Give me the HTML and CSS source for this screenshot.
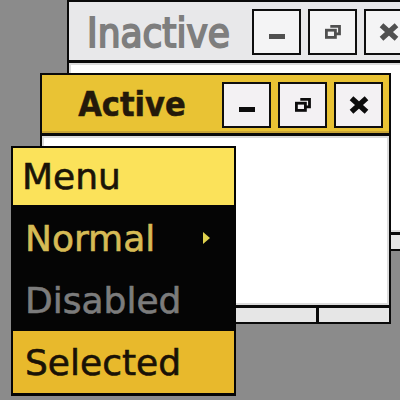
FILE: index.html
```html
<!DOCTYPE html>
<html>
<head>
<meta charset="utf-8">
<link rel="stylesheet" href="styles.css">
</head>
<body>
<div class="desk">
  <div class="window inactive">
    <div class="titlebar">
      <span class="title">Inactive</span>
      <div class="buttons">
        <span class="btn"><svg width="16" height="16" viewBox="0 0 16 16"><rect x="0" y="10" width="16" height="5" fill="currentColor"/></svg></span>
        <span class="btn"><svg width="16" height="14" viewBox="0 0 16 14"><path d="M5.3 1.4h9.2v7.4H11" fill="none" stroke="currentColor" stroke-width="2.8"/><rect x="1.4" y="5.2" width="9" height="7.2" fill="none" stroke="currentColor" stroke-width="2.8"/></svg></span>
        <span class="btn"><svg width="20" height="18" viewBox="0 0 20 18"><path d="M4.5 4L15.5 14M15.5 4L4.5 14" stroke="currentColor" stroke-width="5.4" stroke-linecap="square"/></svg></span>
      </div>
    </div>
    <div class="content"></div>
    <div class="footer"><span class="seg"></span><span class="seg mid"></span><span class="seg"></span></div>
  </div>
  <div class="window active">
    <div class="titlebar">
      <span class="title">Active</span>
      <div class="buttons">
        <span class="btn"><svg width="16" height="16" viewBox="0 0 16 16"><rect x="0" y="10" width="16" height="5" fill="currentColor"/></svg></span>
        <span class="btn"><svg width="16" height="14" viewBox="0 0 16 14"><path d="M5.3 1.4h9.2v7.4H11" fill="none" stroke="currentColor" stroke-width="2.8"/><rect x="1.4" y="5.2" width="9" height="7.2" fill="none" stroke="currentColor" stroke-width="2.8"/></svg></span>
        <span class="btn"><svg width="20" height="18" viewBox="0 0 20 18"><path d="M4.5 4L15.5 14M15.5 4L4.5 14" stroke="currentColor" stroke-width="5.4" stroke-linecap="square"/></svg></span>
      </div>
    </div>
    <div class="content"></div>
    <div class="footer"><span class="seg"></span><span class="seg mid"></span><span class="seg"></span></div>
  </div>
  <div class="menu">
    <div class="item header">Menu</div>
    <div class="item normal">Normal<span class="arrow"></span></div>
    <div class="item disabled">Disabled</div>
    <div class="item selected">Selected</div>
  </div>
</div>
</body>
</html>
```
FILE: styles.css
```css
html, body {
  margin: 0;
  padding: 0;
}
body {
  background: #8b8b8b;
  width: 400px;
  height: 400px;
  overflow: hidden;
  font-family: "DejaVu Sans", sans-serif;
}
.desk {
  position: relative;
  width: 400px;
  height: 400px;
  overflow: hidden;
}
.window {
  position: absolute;
  box-sizing: border-box;
  height: 251px;
  border: 2px solid #0a0a0a;
  display: flex;
  flex-direction: column;
  background: #fff;
}
.inactive {
  left: 67px;
  top: 0;
  width: 354px;
}
.active {
  left: 40px;
  top: 73px;
  width: 351px;
}
.titlebar {
  height: 58px;
  flex: none;
  display: flex;
  border-bottom: 3px solid #0a0a0a;
  padding-right: 6px;
}
.active .titlebar {
  background: #e9c334;
  box-shadow: inset 0 -2px 0 #c9a536;
}
.inactive .titlebar {
  background: #e8e8ea;
}
.title {
  flex: 1;
  text-align: center;
  font-family: "DejaVu Sans Condensed", "DejaVu Sans", sans-serif;
  font-stretch: condensed;
}
.active .title {
  font-size: 34px;
  font-weight: bold;
  line-height: 58px;
  color: #24190a;
  -webkit-text-stroke: 0.5px #24190a;
}
.inactive .title {
  font-size: 40px;
  line-height: 58px;
  padding-top: 2px;
  padding-right: 4px;
  color: #7e7e7e;
  -webkit-text-stroke: 1.8px #7e7e7e;
}
.buttons {
  display: flex;
  gap: 7px;
  padding-top: 7px;
}
.btn {
  box-sizing: border-box;
  width: 49px;
  height: 46px;
  border: 2px solid #0e0e0e;
  background: #f3f1f3;
  display: flex;
  align-items: center;
  justify-content: center;
  color: #0c0c0c;
}
.inactive .btn {
  color: #505050;
  background: #f4f4f5;
}
.content {
  flex: 1;
  border: 2px solid #dcdcdc;
  background: #fff;
}
.footer {
  height: 14px;
  flex: none;
  border-top: 3px solid #0a0a0a;
  display: flex;
  background: #e4e4e4;
}
.seg {
  width: 70px;
  background: #e6e6e6;
}
.seg.mid {
  flex: 1;
  border-left: 3px solid #0a0a0a;
  border-right: 3px solid #0a0a0a;
}
.menu {
  position: absolute;
  left: 11px;
  top: 146px;
  width: 225px;
  box-sizing: border-box;
  border: 2px solid #050505;
  border-bottom-width: 3px;
  background: #050505;
  display: flex;
  flex-direction: column;
  font-size: 36px;
}
.item {
  height: 62px;
  display: flex;
  align-items: center;
  padding-left: 12px;
  -webkit-text-stroke: 0.6px currentColor;
}
.item.header {
  height: 57px;
  margin-bottom: 2px;
  background: #fbe25a;
  color: #1a1408;
  padding-left: 9px;
}
.item.normal {
  color: #d6bb55;
}
.item.disabled {
  color: #7c7c7c;
}
.item.selected {
  background: #e8b92c;
  color: #1a1206;
}
.arrow {
  width: 0;
  height: 0;
  border-left: 7px solid #e0d24e;
  border-top: 6px solid transparent;
  border-bottom: 6px solid transparent;
  margin-left: auto;
  margin-right: 24px;
  -webkit-text-stroke: 0;
}
```
